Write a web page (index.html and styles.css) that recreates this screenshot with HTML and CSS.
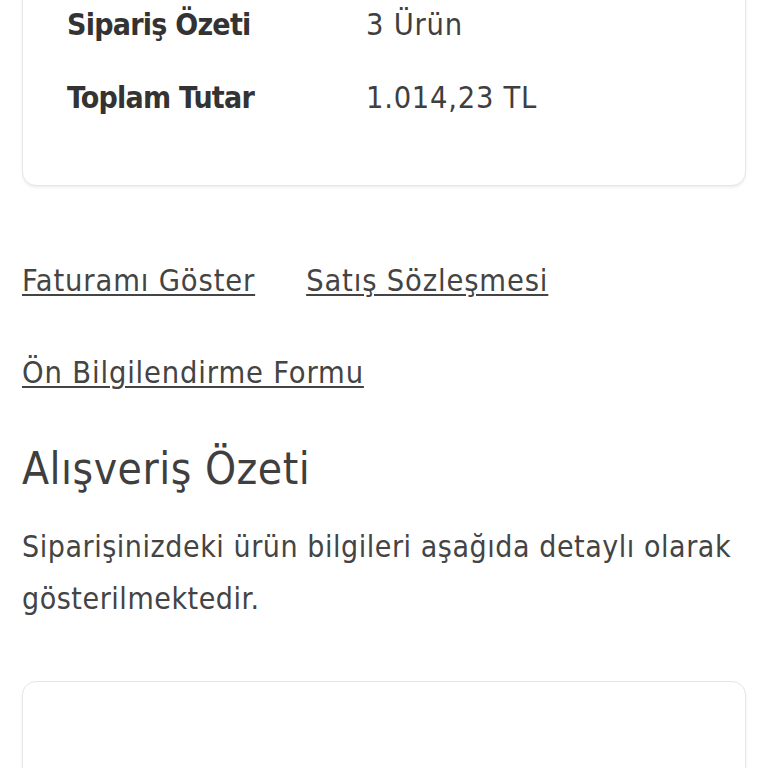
FILE: index.html
```html
<!DOCTYPE html>
<html lang="tr">
<head>
<meta charset="utf-8">
<link rel="stylesheet" href="styles.css">
</head>
<body>
<div class="page">
  <section class="card summary">
    <div class="row"><span class="label">Sipariş Özeti</span><span class="value">3 Ürün</span></div>
    <div class="row"><span class="label">Toplam Tutar</span><span class="value">1.014,23 TL</span></div>
  </section>
  <nav class="links">
    <div class="link-row"><a href="#">Faturamı Göster</a><a href="#">Satış Sözleşmesi</a></div>
    <div class="link-row"><a href="#">Ön Bilgilendirme Formu</a></div>
  </nav>
  <h2 class="title">Alışveriş Özeti</h2>
  <p class="desc">Siparişinizdeki ürün bilgileri aşağıda detaylı olarak gösterilmektedir.</p>
  <section class="card products"></section>
</div>
</body>
</html>
```
FILE: styles.css
```css
html, body {
  margin: 0;
  padding: 0;
  background: #fff;
}
body {
  font-family: "DejaVu Sans Condensed", "DejaVu Sans", sans-serif;
  font-stretch: condensed;
  color: #3f3f3f;
  overflow: hidden;
  height: 768px;
}
.page {
  padding: 0 22px;
}
.card {
  border: 1.5px solid #e6e6e6;
  border-radius: 14px;
  box-shadow: 0 2px 3px rgba(0,0,0,0.06);
  background: #fff;
}
.summary {
  margin-top: -60px;
  padding: 64px 0 67px 44px;
}
.row {
  display: grid;
  grid-template-columns: 299px auto;
  height: 40px;
  line-height: 40px;
  font-size: 30px;
}
.row + .row {
  margin-top: 33px;
}
.label {
  font-weight: bold;
  color: #333;
  letter-spacing: -0.75px;
}
.value {
  color: #3f3f3f;
  font-size: 30.5px;
  letter-spacing: 0.75px;
}
.links {
  margin-top: 75px;
  display: flex;
  flex-direction: column;
  gap: 52px;
}
.link-row {
  display: flex;
  gap: 51px;
  height: 40px;
  line-height: 40px;
  font-size: 30.5px;
}
.link-row a {
  color: #444;
  letter-spacing: 0.85px;
  text-decoration: underline;
  text-decoration-thickness: 2px;
  text-underline-offset: 3px;
}
.title {
  margin: 50px 0 0;
  font-size: 44px;
  line-height: 52px;
  font-weight: normal;
  color: #3f3f3f;
  letter-spacing: 0.5px;
}
.desc {
  margin: 26px 0 0;
  font-size: 30px;
  line-height: 52px;
  color: #444;
  letter-spacing: 0.55px;
}
.products {
  margin-top: 56px;
  height: 200px;
}
```
